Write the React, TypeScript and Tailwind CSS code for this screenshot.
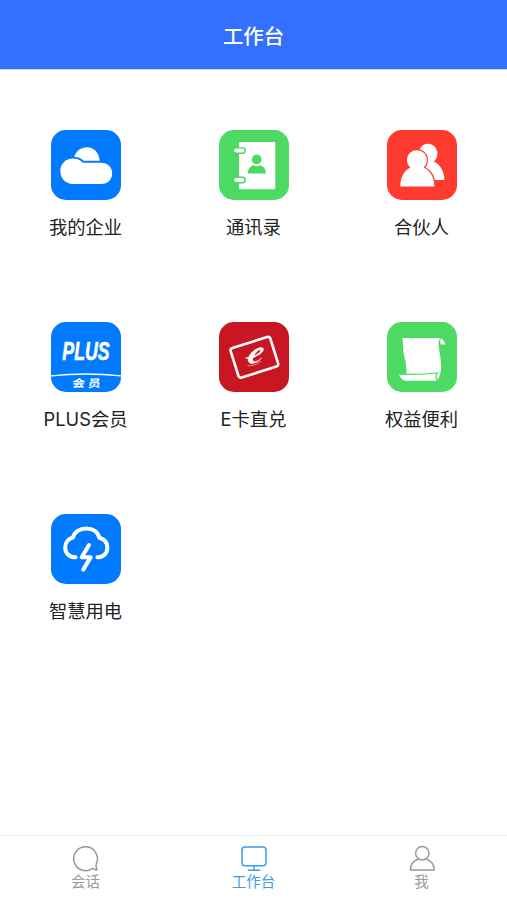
import type { ReactNode } from 'react'

function CompanyIcon() {
  return (
    <svg viewBox="0 0 70 70" className="size-full" fill="#fff">
      <path d="M23.3 27C25 21 30 17.3 36 17.3C43 17.3 48.2 23 48.7 30.8H32.8C30 28 27 26.8 23.3 27Z" />
      <path d="M22 28.5C26 28.5 29.5 30 32 32.8H50C56.5 32.8 61.2 37 61.2 43.2C61.2 49.5 56.5 53.9 50.5 53.9H22C14 53.9 9.3 48 9.3 41C9.3 34 14.5 28.5 22 28.5Z" />
    </svg>
  )
}

function ContactsIcon() {
  return (
    <svg viewBox="0 0 70 70" className="size-full" fill="#fff">
      <rect x="20" y="12" width="36.3" height="47.3" rx="1.2" />
      <rect x="15" y="17.2" width="12" height="6.8" rx="3.4" fill="#4cd964" />
      <rect x="15" y="46.6" width="12" height="6.8" rx="3.4" fill="#4cd964" />
      <rect x="15.2" y="18.6" width="10.3" height="4" rx="2" />
      <rect x="15.2" y="48" width="10.3" height="4" rx="2" />
      <g fill="#4cd964">
        <circle cx="37.7" cy="29.4" r="4.9" />
        <path d="M28.7 43.6C28.7 38.5 32 35.6 35 35.3Q37.8 37 40.6 35.3C43.6 35.6 47 38.5 47 43.6Z" />
      </g>
    </svg>
  )
}

function PartnerIcon() {
  return (
    <svg viewBox="0 0 70 70" className="size-full" fill="#fff">
      <path d="M40.7 13.7C46.2 13.7 50.4 18 50.4 23.5C50.4 27 49 29.8 46.8 31.6C53 34.5 57.4 41 57.4 50H34V23H31.8C32.4 17.7 35.8 13.7 40.7 13.7Z" />
      <path
        d="M29.9 20.3C35.5 20.3 39.8 24.6 39.8 30C39.8 33.2 38.5 35.8 36.5 37.6C43 40.5 47.3 47 47.3 56.4H13.3C13.3 47 17.3 40.5 23.5 37.6C21.3 35.8 20 33.2 20 30C20 24.6 24.3 20.3 29.9 20.3Z"
        stroke="#ff3b30"
        strokeWidth="2.4"
        paintOrder="stroke"
      />
    </svg>
  )
}

function PlusIcon() {
  return (
    <svg viewBox="0 0 70 70" className="size-full" fill="#fff">
      <text fontSize="25" fontWeight="700" fontStyle="italic" stroke="#fff" strokeWidth="0.6" transform="translate(11.3 38) scale(0.71 1)" className="font-['Liberation_Sans',sans-serif]">
        PLUS
      </text>
      <path d="M0 53.3Q35 49.3 70 53.3V54.6Q35 50.9 0 54.6Z" />
      <text fontSize="10.5" fontWeight="700" letterSpacing="2.4" transform="translate(20.8 65.4) scale(1.22 1) skewX(-5)" className="font-['Noto_Sans_CJK_SC',sans-serif]">
        会员
      </text>
    </svg>
  )
}

function CardIcon() {
  return (
    <svg viewBox="0 0 70 70" className="size-full" fill="#fff">
      <rect x="14.6" y="19.8" width="41.6" height="31" rx="2.6" fill="none" stroke="#fff" strokeWidth="2.6" transform="rotate(-17.5 35.4 35.3)" />
      <path
        d="M26.5 35.7C28.2 36.8 30.3 36.7 32.2 36C40 34.2 45.2 29.5 44.3 26.7C43.2 23.8 36 26.6 32 31.2C28.2 35.8 28.2 41 32.3 41.5C36 41.8 40 39.3 42.6 35.9C39.5 38.7 36.3 40.2 34.6 39.3C32.2 38 34.4 33.3 37.3 30.2C39.2 28.1 41.1 27 41.5 28C42 29.6 38 33.5 31.8 34.8C29.5 35.5 28 36 26.5 35.7Z"
        stroke="#fff"
        strokeWidth="0.5"
      />
      <path d="M28.5 43.6C33 44.2 38.5 42.5 42 39.2" fill="none" stroke="#fff" strokeWidth="0.5" />
    </svg>
  )
}

function BenefitsIcon() {
  return (
    <svg viewBox="0 0 70 70" className="size-full" fill="#fff">
      <path d="M15.2 16H53.5C51.5 18 51.3 21 51.8 25C52.7 32 55.4 42 53.6 50C52.9 54 51.8 57.5 49 58.8H19.5C16 58.8 13.5 56.3 12.1 52.3H19.4C20.3 43 17.2 36 16.4 29.5C15.7 24 16.2 19.5 15.2 16Z" />
      <path d="M53.8 16.3C56 17.6 57.7 19.7 58.3 22.5H53.7C53.2 20.2 53.2 18.2 53.8 16.3Z" />
      <path d="M13 52.1C26 52.8 38 52.4 50.3 51C48.8 53.2 48.7 56 50 58.3" fill="none" stroke="#4cd964" strokeWidth="1.2" />
    </svg>
  )
}

function PowerIcon() {
  return (
    <svg viewBox="0 0 70 70" className="size-full" fill="none" stroke="#fff" strokeWidth="4" strokeLinecap="round" strokeLinejoin="round">
      <path d="M24.6 43.3C18 43.3 14.2 39 14.2 33.5C14.2 28.3 17.5 24.6 22 23.5C23.5 18 28.5 14.4 35.3 14.4C42 14.4 47 18 48.3 23.8C53 25 56.4 28.5 56.4 33.8C56.4 39.5 52 43.3 46.4 43.3" />
      <path d="M38 31L30.7 43.2H39.7L32.2 55.6" />
    </svg>
  )
}

const apps: { label: string; color: string; icon: ReactNode }[] = [
  { label: '我的企业', color: 'bg-[#007aff]', icon: <CompanyIcon /> },
  { label: '通讯录', color: 'bg-[#4cd964]', icon: <ContactsIcon /> },
  { label: '合伙人', color: 'bg-[#ff3b30]', icon: <PartnerIcon /> },
  { label: 'PLUS会员', color: 'bg-[#007aff]', icon: <PlusIcon /> },
  { label: 'E卡直兑', color: 'bg-[#c81623]', icon: <CardIcon /> },
  { label: '权益便利', color: 'bg-[#4cd964]', icon: <BenefitsIcon /> },
  { label: '智慧用电', color: 'bg-[#007aff]', icon: <PowerIcon /> },
]

const tabs = [
  {
    label: '会话',
    active: false,
    icon: <path d="M20.6 23.3A11.9 11.9 0 1 1 24.3 18.8C23.8 21 24.2 23 25 24.9C23.3 24.8 21.9 24.2 20.6 23.3Z" />,
  },
  {
    label: '工作台',
    active: true,
    icon: (
      <>
        <rect x="2" y="2.1" width="24" height="18.6" rx="3" />
        <path d="M14 20.7V25M8.5 25.2H19.5" />
      </>
    ),
  },
  {
    label: '我',
    active: false,
    icon: (
      <>
        <circle cx="14.3" cy="8.3" r="6.7" />
        <path d="M10.6 14C5.8 15.5 2.6 19.7 2.4 25.1H26.2C26 19.7 22.8 15.5 18 14" />
      </>
    ),
  },
]

export default function App() {
  return (
    <div className="flex h-[900px] w-[507px] flex-col overflow-hidden bg-white font-['Noto_Sans_CJK_SC',sans-serif]">
      <header className="flex h-[70px] shrink-0 items-center justify-center border-b border-[#c9d9fb] bg-[#3370ff] pt-px text-[20.4px] font-medium text-white">
        工作台
      </header>

      <main className="grid flex-1 auto-rows-[192px] grid-cols-3 content-start px-[1.5px] pt-[60.4px]">
        {apps.map((app) => (
          <div key={app.label} className="flex flex-col items-center">
            <div className={['size-[70px] overflow-hidden rounded-[15px]', app.color].join(' ')}>{app.icon}</div>
            <div className="mt-[12.6px] font-['Inter','Noto_Sans_CJK_SC',sans-serif] text-[18.3px] leading-7 text-[#222]">
              {app.label}
            </div>
          </div>
        ))}
      </main>

      <nav className="grid h-[65px] shrink-0 grid-cols-3 border-t border-[#f0f0f0] px-[1.5px] pt-[9px]">
        {tabs.map((tab) => (
          <div key={tab.label} className={['flex flex-col items-center', tab.active ? 'text-[#3d9be9]' : 'text-[#999]'].join(' ')}>
            <svg viewBox="0 0 28 28" className="size-7" fill="none" stroke="currentColor" strokeWidth="1.5" strokeLinejoin="round" strokeLinecap="round">
              {tab.icon}
            </svg>
            <span className="-mt-0.5 text-[14.5px] leading-5">{tab.label}</span>
          </div>
        ))}
      </nav>
    </div>
  )
}
